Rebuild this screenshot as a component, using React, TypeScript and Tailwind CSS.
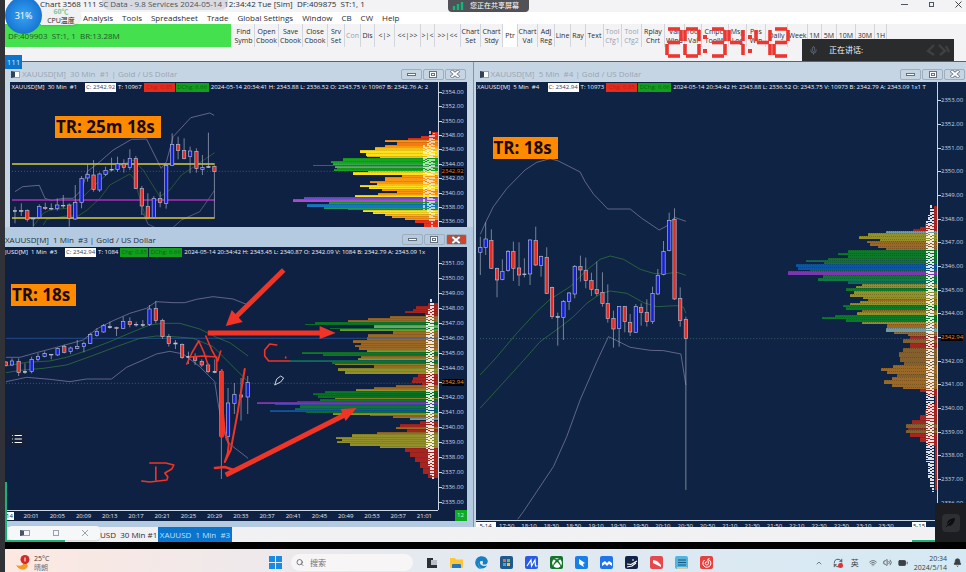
import React from 'react';
import { FaWindows, FaXbox, FaEdge, FaFeatherAlt } from 'react-icons/fa';
import { Bell, BatteryMedium, ChevronUp, Folder, List, Mic, RefreshCw, Search, Volume2, Wifi } from 'lucide-react';

type Candle = [number, number, number, number, number, 'b' | 'r' | 'w'];
type Row = [number, number, string];

const R = '#a82420';
const BR = '#9c6826';
const DB = '#85602f';
const OL = '#93902a';
const GR = '#0b7a28';
const TE = '#0c6a60';
const BL = '#0a55a8';
const PU = '#7b36b0';
const PALE = '#6f9aa0';
const OR = '#fb960f';
const YE = '#fde01c';
const LG = '#14a61e';
const RED = '#e9301c';

// x, high, body top, body bottom, low, colour
const candles30: Candle[] = [
  [45, 350, 362, 364, 400, 'w'], [64, 340, 362, 364, 378, 'w'], [82, 358, 362, 388, 395, 'r'], [100, 383, 385, 387, 410, 'w'],
  [118, 343, 349, 383, 387, 'b'], [136, 338, 352, 356, 360, 'r'], [154, 340, 355, 357, 361, 'w'], [172, 325, 345, 355, 362, 'b'],
  [190, 315, 346, 348, 355, 'w'], [208, 340, 345, 385, 410, 'r'], [226, 285, 338, 387, 390, 'b'], [245, 258, 265, 338, 355, 'b'],
  [263, 223, 253, 264, 275, 'b'], [281, 210, 255, 298, 305, 'r'], [299, 248, 252, 300, 306, 'b'], [317, 230, 241, 253, 258, 'b'],
  [335, 203, 238, 240, 244, 'w'], [353, 200, 222, 238, 246, 'b'], [372, 208, 222, 232, 248, 'r'], [390, 178, 205, 233, 240, 'b'],
  [408, 198, 206, 295, 297, 'r'], [426, 288, 296, 348, 375, 'r'], [444, 310, 349, 383, 388, 'r'], [462, 318, 325, 383, 386, 'b'],
  [481, 305, 326, 338, 352, 'r'], [499, 222, 227, 340, 356, 'b'], [517, 130, 163, 226, 228, 'b'], [535, 140, 163, 182, 208, 'r'],
  [553, 145, 182, 206, 208, 'r'], [571, 170, 183, 200, 250, 'b'], [590, 175, 184, 236, 248, 'r'], [608, 195, 232, 238, 255, 'b'],
  [626, 128, 230, 232, 234, 'w'], [644, 226, 229, 245, 383, 'r'],
];

const candles1: Candle[] = [
  [18, 393, 396, 407, 409, 'r'], [36, 385, 393, 405, 408, 'b'], [56, 385, 394, 428, 438, 'r'], [75, 400, 424, 427, 432, 'w'],
  [95, 380, 388, 424, 430, 'b'], [114, 370, 379, 388, 393, 'b'], [134, 364, 371, 379, 382, 'b'], [154, 372, 373, 375, 388, 'w'],
  [173, 353, 356, 375, 378, 'b'], [193, 344, 350, 367, 370, 'r'], [212, 350, 354, 365, 372, 'b'], [232, 330, 349, 355, 358, 'b'],
  [252, 335, 340, 350, 367, 'b'], [271, 308, 314, 340, 342, 'b'], [291, 295, 304, 317, 320, 'b'], [311, 282, 287, 306, 308, 'b'],
  [330, 275, 290, 293, 296, 'w'], [350, 290, 293, 296, 318, 'r'], [370, 260, 274, 295, 297, 'b'], [390, 262, 275, 284, 292, 'r'],
  [409, 275, 283, 285, 290, 'w'], [429, 270, 284, 286, 291, 'w'], [449, 225, 237, 284, 288, 'b'], [468, 213, 236, 272, 280, 'r'],
  [488, 266, 271, 320, 327, 'r'], [507, 312, 319, 341, 350, 'r'], [527, 330, 339, 342, 357, 'w'], [547, 340, 344, 383, 387, 'r'],
  [566, 365, 379, 382, 402, 'w'], [586, 370, 379, 391, 405, 'r'], [606, 388, 394, 405, 411, 'r'], [625, 400, 405, 425, 430, 'r'],
  [645, 388, 424, 427, 430, 'w'], [665, 420, 425, 620, 747, 'r'], [685, 474, 519, 620, 640, 'b'], [704, 459, 493, 520, 552, 'b'],
  [724, 444, 495, 501, 572, 'r'], [744, 438, 458, 501, 552, 'b'],
];

const candles5: Candle[] = [
  [31, 440, 473, 487, 555, 'b'], [47, 397, 447, 473, 495, 'b'], [64, 418, 451, 535, 537, 'r'], [81, 533, 536, 570, 622, 'r'],
  [97, 508, 544, 569, 571, 'b'], [114, 480, 484, 542, 545, 'b'], [130, 455, 485, 535, 573, 'r'], [147, 457, 534, 555, 588, 'r'],
  [163, 505, 552, 554, 562, 'w'], [180, 448, 450, 552, 585, 'b'], [197, 410, 452, 525, 528, 'r'], [213, 497, 500, 527, 560, 'b'],
  [230, 472, 502, 610, 612, 'r'], [246, 590, 593, 680, 687, 'r'], [263, 668, 680, 682, 767, 'w'], [280, 630, 635, 683, 750, 'b'],
  [297, 606, 609, 635, 660, 'b'], [314, 525, 529, 612, 625, 'b'], [331, 497, 530, 540, 575, 'r'], [347, 503, 542, 572, 595, 'r'],
  [364, 548, 572, 598, 618, 'r'], [380, 515, 599, 610, 618, 'r'], [397, 547, 607, 641, 650, 'r'], [413, 583, 641, 686, 698, 'r'],
  [430, 662, 685, 717, 773, 'r'], [447, 648, 650, 716, 770, 'b'], [464, 648, 650, 695, 727, 'r'], [480, 672, 697, 726, 738, 'r'],
  [497, 642, 650, 727, 729, 'b'], [513, 640, 653, 667, 707, 'r'], [530, 628, 667, 695, 710, 'r'], [547, 590, 611, 695, 702, 'b'],
  [563, 537, 556, 612, 615, 'b'], [580, 453, 485, 554, 556, 'b'], [597, 368, 391, 482, 484, 'b'], [613, 355, 388, 627, 630, 'r'],
  [630, 592, 626, 692, 710, 'r'], [647, 680, 688, 746, 1200, 'r'],
];

// y, left edge, colour; every row runs down to the next one
const profile30: Row[] = [
  [132, 432, RED], [136, 421, RED], [138, 408, RED], [140, 385, OR], [142, 397, '#f47a12'], [145, 385, OR], [147, 375, '#fdb914'],
  [150, 360, YE], [153, 366, YE], [156, 367, '#fdc818'], [157, 380, YE], [158, 343, LG], [161, 331, LG], [163, 333, '#37a64a'], [165, 313, '#1b7f78'],
  [166, 335, '#5aa86a'], [168, 337, LG], [169, 334, LG], [171, 368, YE], [172, 353, YE], [175, 402, OR], [177, 385, OR], [181, 370, OR],
  [183, 377, '#fdb914'], [185, 360, YE], [187, 369, YE], [189, 382, OR], [191, 397, OR], [193, 378, OR], [195, 355, YE],
  [197, 304, '#6550c8'], [199, 293, '#a84bd0'], [202, 329, LG], [204, 307, '#1676c0'], [207, 324, '#1c9a60'], [209, 348, LG], [210, 363, YE],
  [212, 373, YE], [214, 385, '#fdb914'], [216, 392, OR], [218, 405, OR], [220, 415, RED], [223, 424, RED], [227, 430, ''],
];

const profile1: Row[] = [
  [303, 428, R], [306, 416, R], [309, 413, R], [311, 405, R], [313, 425, R], [316, 390, BR], [318, 368, BR], [320, 348, BR],
  [322, 315, GR], [324, 305, GR], [325, 374, '#6aa86a'], [328, 330, GR], [329, 340, '#6f9a2c'], [331, 393, BR], [334, 368, BR],
  [337, 367, BR], [340, 353, BR], [343, 361, BR], [345, 355, BR], [347, 359, BR], [350, 367, OL], [352, 302, GR], [354, 323, GR],
  [356, 361, BR], [358, 358, OL], [360, 290, TE], [362, 332, GR], [364, 335, OL], [365, 374, BR], [368, 338, OL], [371, 345, OL],
  [374, 418, R], [377, 413, R], [380, 412, R], [383, 422, R], [385, 396, BR], [387, 374, BR], [389, 356, OL], [391, 325, GR],
  [393, 313, '#087020'], [395, 318, '#087020'], [398, 335, OL], [399, 320, GR], [401, 297, GR], [402, 257, PU], [404, 275, '#3a50b0'], [405, 300, GR],
  [408, 295, TE], [410, 270, BL], [412, 306, GR], [413, 333, OL], [415, 370, BR], [416, 393, BR], [418, 410, PALE], [420, 425, ''],
  [421, 420, R], [424, 400, R], [427, 396, BR], [429, 407, R], [432, 377, BR], [434, 352, OL], [437, 336, OL], [439, 342, OL],
  [441, 337, OL], [443, 350, OL], [446, 380, OL], [448, 405, R], [452, 410, R], [457, 415, R], [462, 420, R], [468, 423, R], [474, 428, R], [478, 430, ''],
];

const profile5: Row[] = [
  [206, 934, R], [223, 925, R], [227, 920, R], [229, 913, R], [231, 886, PALE], [233, 868, OL], [236, 859, OL], [239, 880, OL],
  [241, 867, BR], [243, 870, BR], [246, 878, BR], [248, 886, BR], [250, 848, GR], [253, 838, GR], [255, 848, GR], [258, 828, GR],
  [260, 806, TE], [262, 824, GR], [264, 796, BL], [267, 798, BL], [270, 810, TE], [271, 788, PU], [275, 823, GR], [278, 818, '#0a7a48'],
  [281, 848, TE], [284, 862, OL], [286, 856, OL], [288, 846, GR], [291, 854, OL], [294, 850, OL], [297, 863, OL], [299, 868, BR],
  [301, 860, OL], [303, 850, OL], [305, 843, GR], [307, 846, GR], [310, 862, BR], [312, 857, OL], [315, 835, GR], [317, 822, GR],
  [319, 846, GR], [322, 862, OL], [324, 887, BR], [328, 886, PALE], [332, 894, BR], [334, 908, BR], [336, 910, R], [339, 903, DB],
  [343, 910, R], [348, 903, DB], [352, 899, DB], [357, 900, DB], [362, 904, DB], [365, 893, BR], [368, 881, BR], [371, 887, BR],
  [374, 897, DB], [377, 892, BR], [380, 884, BR], [384, 892, BR], [387, 903, BR], [389, 920, R], [392, 927, R], [396, 935, R],
  [404, 927, R], [410, 925, R], [415, 920, R], [420, 912, R], [424, 906, DB], [428, 908, R], [430, 906, DB], [433, 910, R],
  [437, 920, R], [442, 927, R], [446, 935, R], [490, 936, ''],
];

const Candles = ({ data }: { data: Candle[] }) => (
  <g>
    {data.map(([x, high, top, bottom, low, tone]) => (
      <g key={x}>
        <line x1={x} x2={x} y1={high} y2={low} stroke="#aab4c4" strokeWidth="2" />
        <rect
          x={x - 5}
          y={top}
          width="10"
          height={bottom - top}
          fill={tone === 'b' ? '#1420d8' : tone === 'r' ? '#ea2a1e' : '#dfe6ee'}
          stroke="#b4bad2"
          strokeWidth="2"
        />
      </g>
    ))}
  </g>
);

const Profile = ({ rows, right }: { rows: Row[]; right: number }) => (
  <g shapeRendering="crispEdges">
    {rows.slice(0, -1).map(([y, x, fill], i) =>
      fill ? (
        <g key={y}>
          <rect x={x} y={y} width={right - x} height={rows[i + 1][0] - y} fill={fill} />
          <line x1={x} x2={right} y1={y + 0.5} y2={y + 0.5} stroke="#1a1a10" strokeOpacity="0.25" strokeDasharray="1 1" />
        </g>
      ) : null
    )}
  </g>
);

const Prints = ({ x, top, bottom, soft }: { x: number; top: number; bottom: number; soft?: boolean }) => (
  <g stroke="#fff" strokeOpacity={soft ? 0.65 : 0.85} strokeWidth="2" shapeRendering="crispEdges">
    <line x1={x} x2={x} y1={top + 16} y2={bottom - 30} strokeDasharray="2 1 1 1" />
    <line x1={x + 2} x2={x + 2} y1={top + 10} y2={bottom - 14} strokeDasharray="1 1 3 1" />
    <line x1={x + 4} x2={x + 4} y1={top} y2={bottom - 5} strokeDasharray="3 1 2 1" />
    <line x1={x + 6} x2={x + 6} y1={top + 4} y2={bottom} strokeDasharray="2 1" />
    {soft && <line x1={x - 2} x2={x - 2} y1={top + 14} y2={bottom - 16} strokeDasharray="3 1 1 1" />}
    {soft && <line x1={x + 8} x2={x + 8} y1={top + 2} y2={bottom - 6} strokeDasharray="1 1 2 2" />}
  </g>
);

const PriceAxis = ({ from, to, step, last, lastAt }: { from: number; to: number; step: number; last: string; lastAt?: number }) => {
  const labels: number[] = [];
  for (let p = from; p >= to; p -= step) labels.push(p);
  return (
    <>
      {labels.map((p) => (
        <div key={p} className="flex min-h-0 flex-1 items-center">
          <span className="w-[3px] border-t border-slate-300"></span>
          {p === lastAt ? <span className="bg-black text-[#f28d38]">{last}</span> : <span>{p}.00</span>}
        </div>
      ))}
    </>
  );
};

const WindowButtons = ({ active }: { active?: boolean }) => {
  const base = 'flex h-[11px] w-[21px] items-center justify-center rounded-xs border border-[#9fadbd] text-[#66717e]';
  return (
    <div className="flex gap-px">
      <button aria-label="Minimize" className={base}>
        <span className="h-[3px] w-[9px] border border-current bg-white"></span>
      </button>
      <button aria-label="Restore" className={base}>
        <span className="flex h-[7px] w-[8px] items-center justify-center border border-current bg-white">
          <span className="h-[3px] w-[4px] border border-current"></span>
        </span>
      </button>
      <button aria-label="Close" className={active ? `${base} bg-[#d2452c]` : base}>
        <svg viewBox="0 0 10 8" className="h-[8px] w-[10px]">
          <path d="M1 0.5L9 7.5M9 0.5L1 7.5" stroke="#66717e" strokeWidth="3.4" />
          <path d="M1.4 1L8.6 7M8.6 1L1.4 7" stroke="#fff" strokeWidth="1.9" />
        </svg>
      </button>
    </div>
  );
};

const WindowTitle = ({ title, active }: { title: string; active?: boolean }) => (
  <div className={active ? 'flex h-[20px] shrink-0 items-center justify-between pt-[5px]' : 'flex h-[20px] shrink-0 items-center justify-between pt-[4px] pr-px pl-[6px]'}>
    <div className={active ? 'flex items-center text-[8px] text-[#26323f]' : 'flex items-center gap-[2px] text-[8px] text-[#97a5b3]'}>
      {!active && <span className="h-[7px] w-[9px] border border-slate-400 border-l-4 border-l-slate-700 bg-white"></span>}
      <h2 className="whitespace-pre">{title}</h2>
    </div>
    <WindowButtons active={active} />
  </div>
);

type InfoProps = { name: string; nameWidth: string; close: string; ticks: string; rest: string; firstTone: string };

const InfoLine = ({ name, nameWidth, close, ticks, rest, firstTone }: InfoProps) => (
  <div className="flex h-[10px] shrink-0 items-center gap-[2px] overflow-hidden text-[6px] leading-[9px] whitespace-pre text-slate-100">
    <span className={`shrink-0 ${nameWidth}`}>{name}</span>
    <span className="bg-white px-px text-[#33415c]">C: {close}</span>
    <span>T: {ticks}</span>
    <span className="flex shrink-0 gap-px">
      <span className={firstTone}>Chg: 0.85</span>
      <span className="w-[33px] bg-[#12a01c] text-center text-[#0a6414]">DChg: 6.66</span>
    </span>
    <span>{rest}</span>
  </div>
);

const tools = [
  ['Find', 'Symb', 'w-[22px]'], ['Open', 'Cbook', 'w-[24px]'], ['Save', 'Cbook', 'w-[24px]'], ['Close', 'Cbook', 'w-[25px]'],
  ['Srv', 'Set', 'w-[17px]'], ['Con', '', 'w-[16px] text-gray-400'], ['Dis', '', 'w-[14px]'], ['<|>', '', 'w-[20px]'],
  ['<<|>>', '', 'w-[26px]'], ['>|<', '', 'w-[14px]'], ['>>|<<', '', 'w-[26px]'], ['Chart', 'Set', 'w-[20px]'],
  ['Chart', 'Stdy', 'w-[22px]'], ['Ptr', '', 'w-[15px] bg-white'], ['Chart', 'Val', 'w-[20px]'], ['Adj', 'Reg', 'w-[17px]'],
  ['Line', '', 'w-[16px]'], ['Ray', '', 'w-[15px]'], ['Text', '', 'w-[18px]'], ['Tool', 'Cfg1', 'w-[18px] text-gray-400'],
  ['Tool', 'Cfg2', 'w-[20px] text-gray-400'], ['Rplay', 'Chrt', 'w-[23px]'], ['Var', 'Wind', 'w-[20px]'], ['Tool', 'Val', 'w-[17px]'],
  ['Cmpct', 'ToolW', 'w-[27px]'], ['Msg', 'Log', 'w-[18px]'], ['Pos', 'Win', 'w-[19px]'], ['Daily', '', 'w-[22px]'],
  ['Week', '', 'w-[20px]'], ['1M', '', 'w-[14px]'], ['5M', '', 'w-[15px]'], ['10M', '', 'w-[19px]'], ['30M', '', 'w-[19px]'], ['1H', '', 'w-[12px]'],
];

// lit segments of the desktop clock: top, upper right, lower right, bottom, lower left, upper left, middle
const segments = ['M2 1H14', 'M15 2V13', 'M15 16V27', 'M2 28H14', 'M1 16V27', 'M1 2V13', 'M2 14.5H14'];
const lit: Record<string, number[]> = { '0': [0, 1, 2, 3, 4, 5], '2': [0, 1, 6, 4, 3], '3': [0, 1, 6, 2, 3], '4': [5, 6, 1, 2] };
const clockDigits: [string, number][] = [['2', 2], ['0', 20], ['3', 46], ['4', 64], ['4', 91], ['2', 109]];

const DesktopClock = () => (
  <svg role="img" aria-label="20:34:42" viewBox="0 0 128 33" className="absolute top-[26px] left-[659px] h-[33px] w-[128px]">
    <g stroke="#ee3630" strokeWidth="3.6" fill="none">
      {clockDigits.map(([d, x]) => (
        <g key={x} transform={`translate(${x} 2)`}>
          {lit[d].map((s) => (
            <path key={s} d={segments[s]} />
          ))}
        </g>
      ))}
      <path d="M39 11h4M39 25h4M84 11h4M84 25h4" strokeWidth="4" />
    </g>
  </svg>
);

const Header = () => (
  <header className="relative shrink-0 bg-[#f3f3f5] text-[#2c2c30]">
    <div className="flex h-[12px] items-center justify-between pr-1 pl-[35px] text-[8px] leading-[8px]">
      <h1 className="whitespace-pre pb-1">Chart 3568 111 SC Data - 9.8 Services 2024-05-14 12:34:42 Tue [Sim]  DF:409875  ST:1, 1</h1>
      <div className="flex items-center gap-[21px] pb-1">
        <button aria-label="Minimize" className="w-[7px] border-t border-gray-600"></button>
        <button aria-label="Restore" className="h-[5px] w-[5px] border border-gray-600"></button>
        <button aria-label="Close">
          <svg viewBox="0 0 7 7" className="h-[7px] w-[7px]"><path d="M0.5 0.5L6.5 6.5M6.5 0.5L0.5 6.5" stroke="#444" /></svg>
        </button>
      </div>
    </div>
    <nav className="flex h-[12px] items-center gap-[9px] bg-white pl-[78px] text-[8px]">
      {['Analysis', 'Tools', 'Spreadsheet', 'Trade', 'Global Settings', 'Window', 'CB', 'CW', 'Help'].map((m) => (
        <button key={m}>{m}</button>
      ))}
    </nav>
    <div className="flex h-[23px] overflow-hidden">
      <div className="flex w-[226px] shrink-0 items-center bg-[#45e04e] pl-[3px] text-[8px] whitespace-pre text-[#1d5a26]">DF:409903  ST:1, 1  BR:13.28M</div>
      <div className="flex pl-[2px] text-[7px] leading-[9px]">
        {tools.map(([a, b, cls], i) => (
          <button key={i} className={`flex shrink-0 flex-col items-center justify-center border-r border-gray-300 whitespace-nowrap ${cls}`}>
            <span>{a}</span>
            {b && <span>{b}</span>}
          </button>
        ))}
      </div>
    </div>
    <div className="h-[15px] border-b border-[#59636d]">
      <button className="h-full w-[17px] bg-[#0b74cc] text-[8px] leading-[12px] text-[#cfe8fb]">111</button>
    </div>

    {/* CPU monitor */}
    <div className="absolute top-[7px] left-[36px] w-[40px] rounded-r-xl bg-[#f0f1f2] text-center text-[7px] leading-[9px] shadow">
      <div className="font-bold text-[#7fc79a]">60℃</div>
      <div className="whitespace-nowrap">CPU温度</div>
    </div>
    <div className="absolute -top-[3px] left-0 flex h-[37px] w-[37px] items-center justify-center rounded-full bg-radial from-[#37a4f6] to-[#0c62c4] text-[9px] text-white">31%</div>
    <div className="absolute top-0 left-[97px] h-[10px] w-[126px] rounded-b-lg bg-gray-400/30"></div>

    {/* Screen sharing badge */}
    <div className="absolute top-0 left-[443px] flex h-[12px] w-[81px] items-center gap-[6px] rounded-b-sm bg-[#505257] pl-1 text-[7px] text-white">
      <svg viewBox="0 0 12 8" className="h-[8px] w-[12px]"><path d="M2 8V4M6 8V2M10 8V0" stroke="#16b47c" strokeWidth="2.4" /></svg>
      <span className="whitespace-nowrap">您正在共享屏幕</span>
    </div>
    <DesktopClock />
    <div className="absolute top-[39px] right-[12px] flex h-[22px] w-[152px] items-center bg-[#2a2b2d] pl-[7px] text-[8px] text-gray-100">
      <Mic className="mr-[11px] h-[9px] w-[9px] text-gray-500" />
      <span>正在讲话:</span>
      <svg viewBox="0 0 24 12" className="ml-auto mr-1 h-[12px] w-[24px]">
        <path d="M8 1L2 7L8 11M13 1L19 7L14 11M20 2L23 8" stroke="#3e4043" strokeWidth="2.4" fill="none" />
      </svg>
    </div>
  </header>
);

const TrLabel = ({ children, place }: { children: string; place: string }) => (
  <div className={`absolute flex h-[22px] items-center bg-[#ff8a00] pr-[6px] pl-px text-[17px] font-bold whitespace-nowrap text-[#190c0c] ${place}`}>{children}</div>
);

const Chart30 = () => (
  <section className="flex min-h-0 flex-[165] flex-col bg-[#c6d5e4] pr-[6px]">
    <WindowTitle title="XAUUSD[M]  30 Min  #1 | Gold / US Dollar" />
    <div className="ml-[5px] flex min-h-0 flex-1 bg-[#0f2143]">
      <div className="relative flex min-w-0 flex-1 flex-col">
        <InfoLine name=" XAUUSD[M]  30 Min  #1" nameWidth="w-[73px]" close="2342.92" ticks="10967" firstTone="w-[31px] bg-[#e62b1c] text-center text-[#b81f14]" rest="2024-05-14 20:34:41 H: 2343.88 L: 2336.52 O: 2343.75 V: 10967 B: 2342.76 A: 2" />
        <svg viewBox="10 92 428 135" preserveAspectRatio="none" className="block h-0 w-full flex-1">
          <Profile rows={profile30} right={438} />
          <Prints x={426} top={131} bottom={227} soft />
          <g transform="translate(0 90) scale(0.3333)" fill="none" strokeWidth="2">
            <path d="M45 305L68 290L118 286L135 325L155 332L190 325L220 325L245 300L262 245L300 215L340 180L395 148L440 147L484 235L500 215L520 140L573 83L630 69L643 76" stroke="#8a86ae" />
            <path d="M430 370L445 403L465 412M520 412L545 390L600 365L643 303" stroke="#6f7394" />
            <path d="M100 408L130 370L150 360L200 355L250 320L285 285L330 245L370 222L400 210L430 240L480 320L510 300L545 255L590 225L645 188M130 405L140 388L200 378L235 378L262 360L300 325L330 285L390 252L402 265L440 390" stroke="#35702f" />
            <path d="M36 244H1280" stroke="#4f7a80" strokeDasharray="3 6" />
            <path d="M36 222H645M36 384H645" stroke="#d8cc3c" strokeWidth="4" />
            <path d="M36 330H645" stroke="#b02cb8" strokeWidth="5" />
            <Candles data={candles30} />
          </g>
        </svg>
        <TrLabel place="top-[34px] left-[45px]">TR: 25m 18s</TrLabel>
      </div>
      <div className="relative flex w-[29px] flex-col overflow-hidden border-l border-slate-300 pt-[3px] text-[6px] leading-[7px] text-slate-300">
        <div className="-mb-[2px] flex min-h-0 flex-1 flex-col">
          <PriceAxis from={2354} to={2336} step={2} last="" />
        </div>
        <span className="absolute top-[86px] left-[3px] bg-black text-[#f07c34]">2342.92</span>
      </div>
    </div>
  </section>
);

const timesLeft = ['20:01', '20:05', '20:09', '20:13', '20:17', '20:21', '20:25', '20:29', '20:33', '20:37', '20:41', '20:45', '20:49', '20:53', '20:57', '21:01'];

const Chart1 = () => (
  <section className="relative flex min-h-0 flex-[300] flex-col bg-[#b3cae1] pr-[6px]">
    <WindowTitle title="XAUUSD[M]  1 Min  #3 | Gold / US Dollar" active />
    <div className="mb-[6px] flex min-h-0 flex-1 bg-[#0f2143]">
      <div className="relative flex min-w-0 flex-1 flex-col">
        <InfoLine name="JUSD[M]  1 Min  #3" nameWidth="w-[58px]" close="2342.94" ticks="1084" firstTone="w-[28px] bg-[#12a01c] text-center text-[#0a6414]" rest="2024-05-14 20:34:42 H: 2343.45 L: 2340.87 O: 2342.09 V: 1084 B: 2342.79 A: 2343.09 1x" />
        <svg viewBox="5 257 433 253" preserveAspectRatio="none" className="block h-0 w-full flex-1">
          <Profile rows={profile1} right={438} />
          <Prints x={427} top={299} bottom={480} />
          <g transform="translate(0 230) scale(0.3333)" fill="none" strokeWidth="2">
            <path d="M18 325H1314" stroke="#2c5ea8" />
            <path d="M18 460H1280" stroke="#4f7a80" strokeDasharray="3 6" />
            <path d="M18 382L60 382L110 368L170 352L250 330L290 297L340 272L390 250L440 235L469 215L520 218L555 218L590 208L640 200L700 207L740 223" stroke="#8a86ae" />
            <path d="M18 455L80 442L150 448L210 455L260 447L335 447L380 412L430 390L470 372L510 364L550 372L600 410L645 455L655 520L665 575L680 630L700 650L745 685" stroke="#8a86ae" />
            <path d="M18 408L80 397L150 393L200 382L260 362L330 335L400 305L450 285L490 280L540 280L600 297L650 322L690 338L745 378M18 428L70 420L130 415L200 405L270 380L350 350L420 325L470 318L520 320L580 325L640 350L690 400L745 455" stroke="#35803a" />
            <Candles data={candles1} />
          </g>
          {/* Markup pen */}
          <g fill="none" stroke="#f03426" strokeWidth="5">
            <path d="M284 270L233 320" />
            <path d="M208 333H322" />
            <path d="M226 475L347 414" />
            <g fill="#f03426" stroke="none">
              <path d="M226 326L232 310L243 322Z" />
              <path d="M336 333L320 326V339Z" />
              <path d="M357 408L341 409L346 421Z" />
            </g>
            <g strokeWidth="1.6" strokeLinejoin="round" strokeLinecap="round">
              <path d="M187 364L192 353L199 341L204 352L209 367M190 357L203 356L217 357M206 336L212 350L218 361L221 351M217 358V371" />
              <path d="M222 370L223 410L225 432L229 444L228 453L225 462L231 450L238 412L245 369" strokeWidth="2" />
              <path d="M222 374V436" strokeWidth="4" />
              <path d="M215 468L225 467L234 470" strokeWidth="2.4" />
              <path d="M277 345L270 344L265 350L265 356L269 361L282 361L290 361M286 357V358" />
              <path d="M150 463L166 463L174 465L172 469L165 473L168 477L167 480L150 482L142 481M156 467V480" />
            </g>
          </g>
          <path d="M275 385L277 379L281 376L284 378L281 382Z" fill="none" stroke="#ccd3dc" strokeWidth="1" />
        </svg>
        <TrLabel place="top-[37px] left-[6px]">TR: 18s</TrLabel>
        <div className="flex h-[11px] shrink-0 items-center border-t border-slate-300 text-[6px] leading-[8px] text-slate-200">
          <span className="w-[9px] bg-white text-center text-slate-900">14</span>
          <div className="ml-[4px] flex flex-1">
            {timesLeft.map((t) => (
              <span key={t} className="flex-1 text-center">{t}</span>
            ))}
          </div>
        </div>
      </div>
      <div className="flex w-[29px] flex-col text-[6px] leading-[7px] text-slate-300">
        <div className="flex min-h-0 flex-1 flex-col border-l border-slate-300 pt-[9px]">
          <PriceAxis from={2351} to={2335} step={1} last="2342.94" lastAt={2343} />
        </div>
        <div className="flex h-[11px] justify-end">
          <span className="w-[12px] bg-[#12a828] text-center leading-[10px] text-[#bff0c4]">12</span>
        </div>
      </div>
    </div>
    <button aria-label="Open list" className="absolute top-[203px] left-0 flex h-[17px] w-[23px] items-center justify-center bg-[#14203a] text-white">
      <List className="h-[12px] w-[12px]" />
    </button>
  </section>
);

const timesRight = ['17:50', '18:10', '18:30', '18:50', '19:10', '19:30', '19:50', '20:10', '20:30', '20:50', '21:10', '21:30', '21:50', '22:10', '22:30', '22:50', '23:10', '23:30'];

const Chart5 = () => (
  <section className="relative flex min-h-0 min-w-0 flex-[493] flex-col border-l border-[#8494a4] bg-[#c6d5e4]">
    <WindowTitle title="XAUUSD[M]  5 Min  #4 | Gold / US Dollar" />
    <div className="ml-[2px] flex min-h-0 flex-1 bg-[#0f2344]">
      <div className="relative flex min-w-0 flex-1 flex-col">
        <InfoLine name=" XAUUSD[M]  5 Min  #4" nameWidth="w-[70px]" close="2342.94" ticks="10973" firstTone="w-[31px] bg-[#e62b1c] text-center text-[#b81f14]" rest="2024-05-14 20:34:42 H: 2343.88 L: 2336.52 O: 2343.75 V: 10973 B: 2342.79 A: 2343.09 1x1 T" />
        <svg viewBox="476 92 461 428" preserveAspectRatio="none" className="block h-0 w-full flex-1">
          <Profile rows={profile5} right={937} />
          <Prints x={927} top={205} bottom={492} />
          <g transform="translate(470 90) scale(0.3333)" fill="none" strokeWidth="2">
            <path d="M31 433L47 397L70 350L110 296L165 240L200 217L240 206L265 213L330 246L345 275L370 312L413 357L480 357L515 385L567 420L590 408L613 382L647 394" stroke="#8a86ae" />
            <path d="M143 1288L160 1265L200 1205L250 1130L290 1040L330 930L380 815L415 740L440 752L480 772L540 781L580 782L632 792L647 885" stroke="#8a86ae" />
            <path d="M30 855L75 807L140 730L200 665L240 628L300 590L350 540L390 508L420 498L460 508L510 538L550 550L580 552L620 547L647 556M30 955L80 900L160 812L210 755L270 712L310 680L350 640L390 612L420 603L470 610L520 638L560 650L620 647L640 652L647 670" stroke="#35803a" />
            <path d="M30 746H1380" stroke="#4f7a80" strokeDasharray="3 6" />
            <Candles data={candles5} />
          </g>
        </svg>
        <TrLabel place="top-[55px] left-[17px]">TR: 18s</TrLabel>
        <div className="flex h-[7px] shrink-0 overflow-hidden border-t border-slate-300 pt-px text-[6px] leading-[8px] whitespace-nowrap text-slate-200">
          <span className="w-[20px] bg-white text-center text-slate-900">5-14</span>
          <div className="mr-[15px] flex flex-1">
            {timesRight.map((t) => (
              <span key={t} className="flex-1 text-center">{t}</span>
            ))}
          </div>
          <span className="mr-[11px] w-[14px] bg-white text-center text-slate-900">5-15</span>
        </div>
      </div>
      <div className="flex w-[29px] flex-col border-l border-slate-300 pt-[7px] pb-[12px] text-[6px] leading-[7px] text-slate-300">
        <PriceAxis from={2353} to={2336} step={1} last="2342.94" lastAt={2343} />
      </div>
    </div>
    <div className="absolute right-0 -bottom-[15px] z-10 flex h-[39px] w-[31px] items-center justify-center bg-[#1b1d21]">
      <span className="flex h-[18px] w-[18px] items-center justify-center rounded bg-[#2d2f33] text-[9px] text-[#0c0d0f]"><FaFeatherAlt /></span>
    </div>
  </section>
);

const TabStrip = () => (
  <div className="relative flex h-[15px] shrink-0 items-stretch bg-[#f1f1f3] pl-[95px] text-[8px] whitespace-pre text-[#2f2f33]">
    <button className="w-[58px] text-left">USD  30 Min #1</button>
    <button className="w-[74px] bg-[#0b74cc] text-[#bfe2fb]">XAUUSD  1 Min  #3</button>
    <div className="absolute bottom-[2px] left-[3px] flex h-[14px] w-[92px] items-center justify-around rounded bg-[#f6f7f9] text-gray-400 shadow">
      <span className="h-[6px] w-[10px] border border-gray-400 border-l-4 border-l-slate-600"></span>
      <span className="h-[6px] w-[6px] border border-gray-400"></span>
      <svg viewBox="0 0 6 6" className="h-[6px] w-[6px]"><path d="M0 0L6 6M6 0L0 6" stroke="currentColor" /></svg>
    </div>
    <span className="absolute bottom-0 left-0 h-[60px] w-[60px] border-b-2 border-l-2 border-[#1bb07c]"></span>
    <span className="absolute right-[31px] bottom-0 w-[23px] border-b-2 border-[#1bb07c]"></span>
  </div>
);

const taskIcon = 'flex h-[13px] w-[13px] items-center justify-center overflow-hidden rounded-xs text-[10px]';

const Taskbar = () => (
  <footer className="grid h-[23px] shrink-0 grid-cols-[1fr_auto_1fr] items-center bg-linear-to-r from-[#fde8e1] via-[#e6e9f0] via-40% to-[#d5e9f4] pt-[4px] text-[7px] text-[#3c3f44]">
    <div className="flex items-center gap-[4px] pl-[11px]">
      <svg viewBox="0 0 14 16" className="h-[16px] w-[14px]">
        <path d="M0 10C4 12 8 10 9 6L12 11C10 16 3 16 0 10Z" fill="#f29a28" />
        <circle cx="9" cy="4.5" r="4.5" fill="#cf2b2b" />
        <path d="M9 2.5V6.5" stroke="#fff" />
      </svg>
      <div className="leading-[9px]">
        <div>25°C</div>
        <div className="text-gray-500">晴朗</div>
      </div>
    </div>
    <div className="flex items-center gap-[12px] pl-[11px]">
      <button aria-label="Start" className="-mr-[3px] text-[13px] text-[#1383d8]">
        <svg viewBox="0 0 13 13" className="h-[13px] w-[13px]"><path d="M0 0H6V6H0ZM7 0H13V6H7ZM0 7H6V13H0ZM7 7H13V13H7Z" fill="#1a8ce0" /></svg>
      </button>
      <label className="flex h-[17px] w-[122px] items-center gap-[6px] rounded-full bg-[#f8f5f6] pl-[5px]">
        <Search className="h-[9px] w-[9px]" />
        <input aria-label="搜索" placeholder="搜索" className="w-full bg-transparent text-[8px] outline-none placeholder:text-gray-500" />
      </label>
      <span className={taskIcon}><svg viewBox="0 0 12 12" className="h-[12px] w-[12px]"><path d="M1 1H7V8H11V11H1Z" fill="#2b2f36" /><path d="M5 3H11V8H5Z" fill="#b9bfc8" /></svg></span>
      <span className={taskIcon}><svg viewBox="0 0 13 12" className="h-[12px] w-[13px]"><path d="M0 1H5L6 2.5H13V11H0Z" fill="#fcc636" /><path d="M2 11V8Q2 7 3 7H10Q11 7 11 8V11Z" fill="#1f78c0" /></svg></span>
      <span className={`${taskIcon} text-[13px] text-[#1580c4]`}><FaEdge /></span>
      <span className={`${taskIcon} bg-[#205a8c]`}><span className="grid grid-cols-2 gap-px">
        <i className="h-[3px] w-[3px] bg-[#f2653a]"></i><i className="h-[3px] w-[3px] bg-[#7fc043]"></i>
        <i className="h-[3px] w-[3px] bg-[#38a8f0]"></i><i className="h-[3px] w-[3px] bg-[#fcc030]"></i>
      </span></span>
      <span className={`${taskIcon} bg-[#2b5be0]`}><svg viewBox="0 0 12 12" className="h-[12px] w-[12px]"><path d="M1 9L5 3L5.5 9L9 3L9.5 9H11.5" stroke="#fff" strokeWidth="1.2" fill="none" /></svg></span>
      <span className={`${taskIcon} bg-[#14742a] text-white`}><FaXbox /></span>
      <span className={`${taskIcon} bg-[#187ee8]`}><svg viewBox="0 0 12 12" className="h-[12px] w-[12px]"><path d="M3 2L9 6L7 7L8 10L3 7Z" fill="#fff" /></svg></span>
      <span className={`${taskIcon} bg-[#1f74e8]`}><svg viewBox="0 0 12 12" className="h-[12px] w-[12px]"><path d="M1 9V6L4 4L6 6L8 4L11 6V9L8 7L6 9L4 7Z" fill="#fff" /></svg></span>
      <span className={`${taskIcon} bg-[#142348]`}><svg viewBox="0 0 12 12" className="h-[12px] w-[12px]"><path d="M1 7L5 7.5L11 4M1 10L6 9L10 6M6 3H8" stroke="#fff" strokeWidth="1.2" fill="none" /></svg></span>
      <span className={`${taskIcon} bg-[#e5484d]`}><svg viewBox="0 0 12 12" className="h-[12px] w-[12px]"><path d="M2 3L6 4L10 8V10L6 8L2 6Z" fill="#fff" /></svg></span>
      <span className={`${taskIcon} bg-[#54b4dc]`}><svg viewBox="0 0 12 12" className="h-[12px] w-[12px]"><path d="M2 3H10M2 5.5H10M2 8H10" stroke="#155a88" strokeWidth="1.2" /><path d="M1 11H11" stroke="#d8c8a0" strokeWidth="2" /></svg></span>
      <span className={`${taskIcon} bg-[#e8403c]`}><svg viewBox="0 0 12 12" className="h-[12px] w-[12px]"><path d="M7.5 2.6A4 4 0 1 1 3.6 3M8.5 1.6L6.8 2.2L7.4 6.6A1.6 1.6 0 1 1 6 4.8" stroke="#fff" strokeWidth="1" fill="none" /></svg></span>
    </div>
    <div className="flex items-center justify-end gap-[6px] pr-[4px]">
      <ChevronUp className="h-[8px] w-[8px]" />
      <span className="relative ml-[4px] mr-[2px]">
        <RefreshCw className="h-[10px] w-[10px]" />
        <span className="absolute right-0 bottom-0 h-[5px] w-[5px] rounded-full bg-[#e03434]"></span>
      </span>
      <span className="mr-[4px] text-[8px]">英</span>
      <Wifi className="h-[8px] w-[8px]" />
      <Volume2 className="h-[9px] w-[9px]" />
      <BatteryMedium className="h-[10px] w-[10px] fill-current" />
      <div className="text-right leading-[9px]">
        <div>20:34</div>
        <div>2024/5/14</div>
      </div>
      <Bell className="h-[9px] w-[9px] fill-current" />
    </div>
  </footer>
);

export default function App() {
  return (
    <div className="flex h-screen overflow-hidden bg-[#303237] pl-[5px] font-['Open_Sans','Noto_Sans_CJK_SC',sans-serif]">
      <div className="flex min-w-0 flex-1 flex-col">
        <Header />
        <main className="flex min-h-0 flex-1">
          <div className="flex min-w-0 flex-[468] flex-col">
            <Chart30 />
            <Chart1 />
          </div>
          <Chart5 />
        </main>
        <TabStrip />
        <div className="h-[7px] shrink-0 bg-black"></div>
        <Taskbar />
      </div>
    </div>
  );
}
